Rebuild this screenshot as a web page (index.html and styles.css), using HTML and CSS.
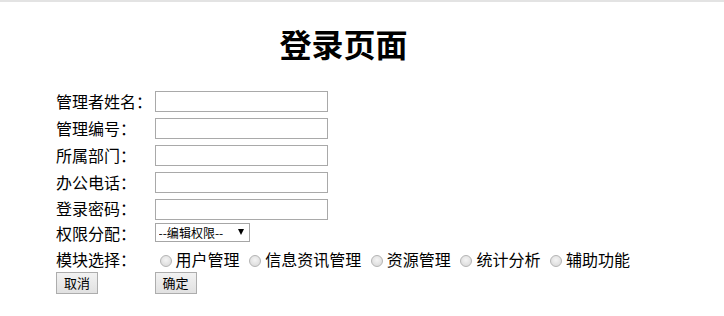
FILE: index.html
```html
<!DOCTYPE html>
<html lang="zh-CN">

<head>
    <meta charset="UTF-8">
    <meta name="viewport" content="width=device-width, initial-scale=1.0">
    <title>登录页面</title>
    <link rel="stylesheet" href="styles.css">
</head>

<body>
    <div class="page">
        <h1 class="title">登录页面</h1>
        <form class="login_form">
            <table class="form_table">
                <tr>
                    <td class="label">管理者姓名：</td>
                    <td><input type="text" class="text_input" name="username"></td>
                </tr>
                <tr>
                    <td class="label">管理编号：</td>
                    <td><input type="text" class="text_input" name="userid"></td>
                </tr>
                <tr>
                    <td class="label">所属部门：</td>
                    <td><input type="text" class="text_input" name="dept"></td>
                </tr>
                <tr>
                    <td class="label">办公电话：</td>
                    <td><input type="text" class="text_input" name="phone"></td>
                </tr>
                <tr class="short">
                    <td class="label">登录密码：</td>
                    <td><input type="password" class="text_input" name="password"></td>
                </tr>
                <tr>
                    <td class="label">权限分配：</td>
                    <td>
                        <span class="select_wrap">
                            <select class="role_select" name="role">
                                <option>--编辑权限--</option>
                                <option>超级管理员</option>
                                <option>普通管理员</option>
                            </select>
                            <span class="select_arrow"></span>
                        </span>
                    </td>
                </tr>
                <tr class="short radio_row">
                    <td class="label">模块选择：</td>
                    <td class="modules">
                        <label><input type="radio" class="radio" name="module">用户管理</label>
                        <label><input type="radio" class="radio" name="module">信息资讯管理</label>
                        <label><input type="radio" class="radio" name="module">资源管理</label>
                        <label><input type="radio" class="radio" name="module">统计分析</label>
                        <label><input type="radio" class="radio" name="module">辅助功能</label>
                    </td>
                </tr>
                <tr class="btn_row">
                    <td><button type="reset" class="btn">取消</button></td>
                    <td><button type="submit" class="btn">确定</button></td>
                </tr>
            </table>
        </form>
    </div>
</body>

</html>
```

FILE: styles.css
```css
html {
    border-top: 2px solid #e3e3e3;
}

body {
    margin: 0;
    padding: 0 8px;
    font-family: "Noto Sans CJK SC", "Microsoft YaHei", sans-serif;
    font-size: 16px;
    color: #000;
}

.page {
    margin-left: 48px;
    width: 575px;
}

.title {
    text-align: center;
    font-size: 32px;
    font-weight: bold;
    margin: 18px 0 21px 0;
    line-height: 46px;
}

.login_form {
    margin: 0;
}

.form_table {
    border-collapse: separate;
    border-spacing: 0 2px;
}

.form_table td {
    padding: 1px 0;
    height: 23px;
    line-height: 23px;
    white-space: nowrap;
    vertical-align: top;
}

.form_table .short td {
    height: 20px;
    line-height: 20px;
}

.short .text_input {
    margin-bottom: -2px;
}

.radio_row td {
    padding-bottom: 0;
}

.btn_row td {
    padding-top: 0;
}

.label {
    width: 101px;
}

.text_input {
    width: 173px;
    height: 21px;
    box-sizing: border-box;
    border: 1px solid #a9a9a9;
    padding: 1px 2px;
    margin: 1px 0 0 0;
    vertical-align: top;
    font-size: 13px;
}

.select_wrap {
    position: relative;
    display: inline-block;
    vertical-align: top;
    margin-top: 1px;
    line-height: 0;
}

.role_select {
    -webkit-appearance: none;
    appearance: none;
    width: 95px;
    height: 19px;
    box-sizing: border-box;
    border: 1px solid #a6a6a6;
    border-radius: 0;
    background: #fff;
    padding: 0 0 0 3px;
    margin: 0;
    font-family: "Noto Sans CJK SC", sans-serif;
    font-size: 12px;
    line-height: 17px;
    color: #000;
}

.select_arrow {
    position: absolute;
    right: 6px;
    top: 6px;
    width: 0;
    height: 0;
    border-left: 3px solid transparent;
    border-right: 3px solid transparent;
    border-top: 6px solid #000;
    pointer-events: none;
}

.modules label {
    margin-right: 1px;
}

.radio {
    -webkit-appearance: none;
    appearance: none;
    width: 12px;
    height: 12px;
    margin: 0 4px 0 5px;
    border: 1px solid #b4b4b4;
    border-radius: 50%;
    background: radial-gradient(circle at 50% 40%, #f4f4f4, #d6d6d6);
    vertical-align: -1px;
}

.btn {
    width: 42px;
    height: 22px;
    padding: 0;
    margin: 1px 0 0 0;
    border: 1px solid #adadad;
    border-radius: 0;
    background: linear-gradient(#f2f2f2, #e1e1e1);
    font-family: "Noto Sans CJK SC", sans-serif;
    font-size: 13px;
    line-height: 20px;
    color: #000;
    vertical-align: top;
}
```
